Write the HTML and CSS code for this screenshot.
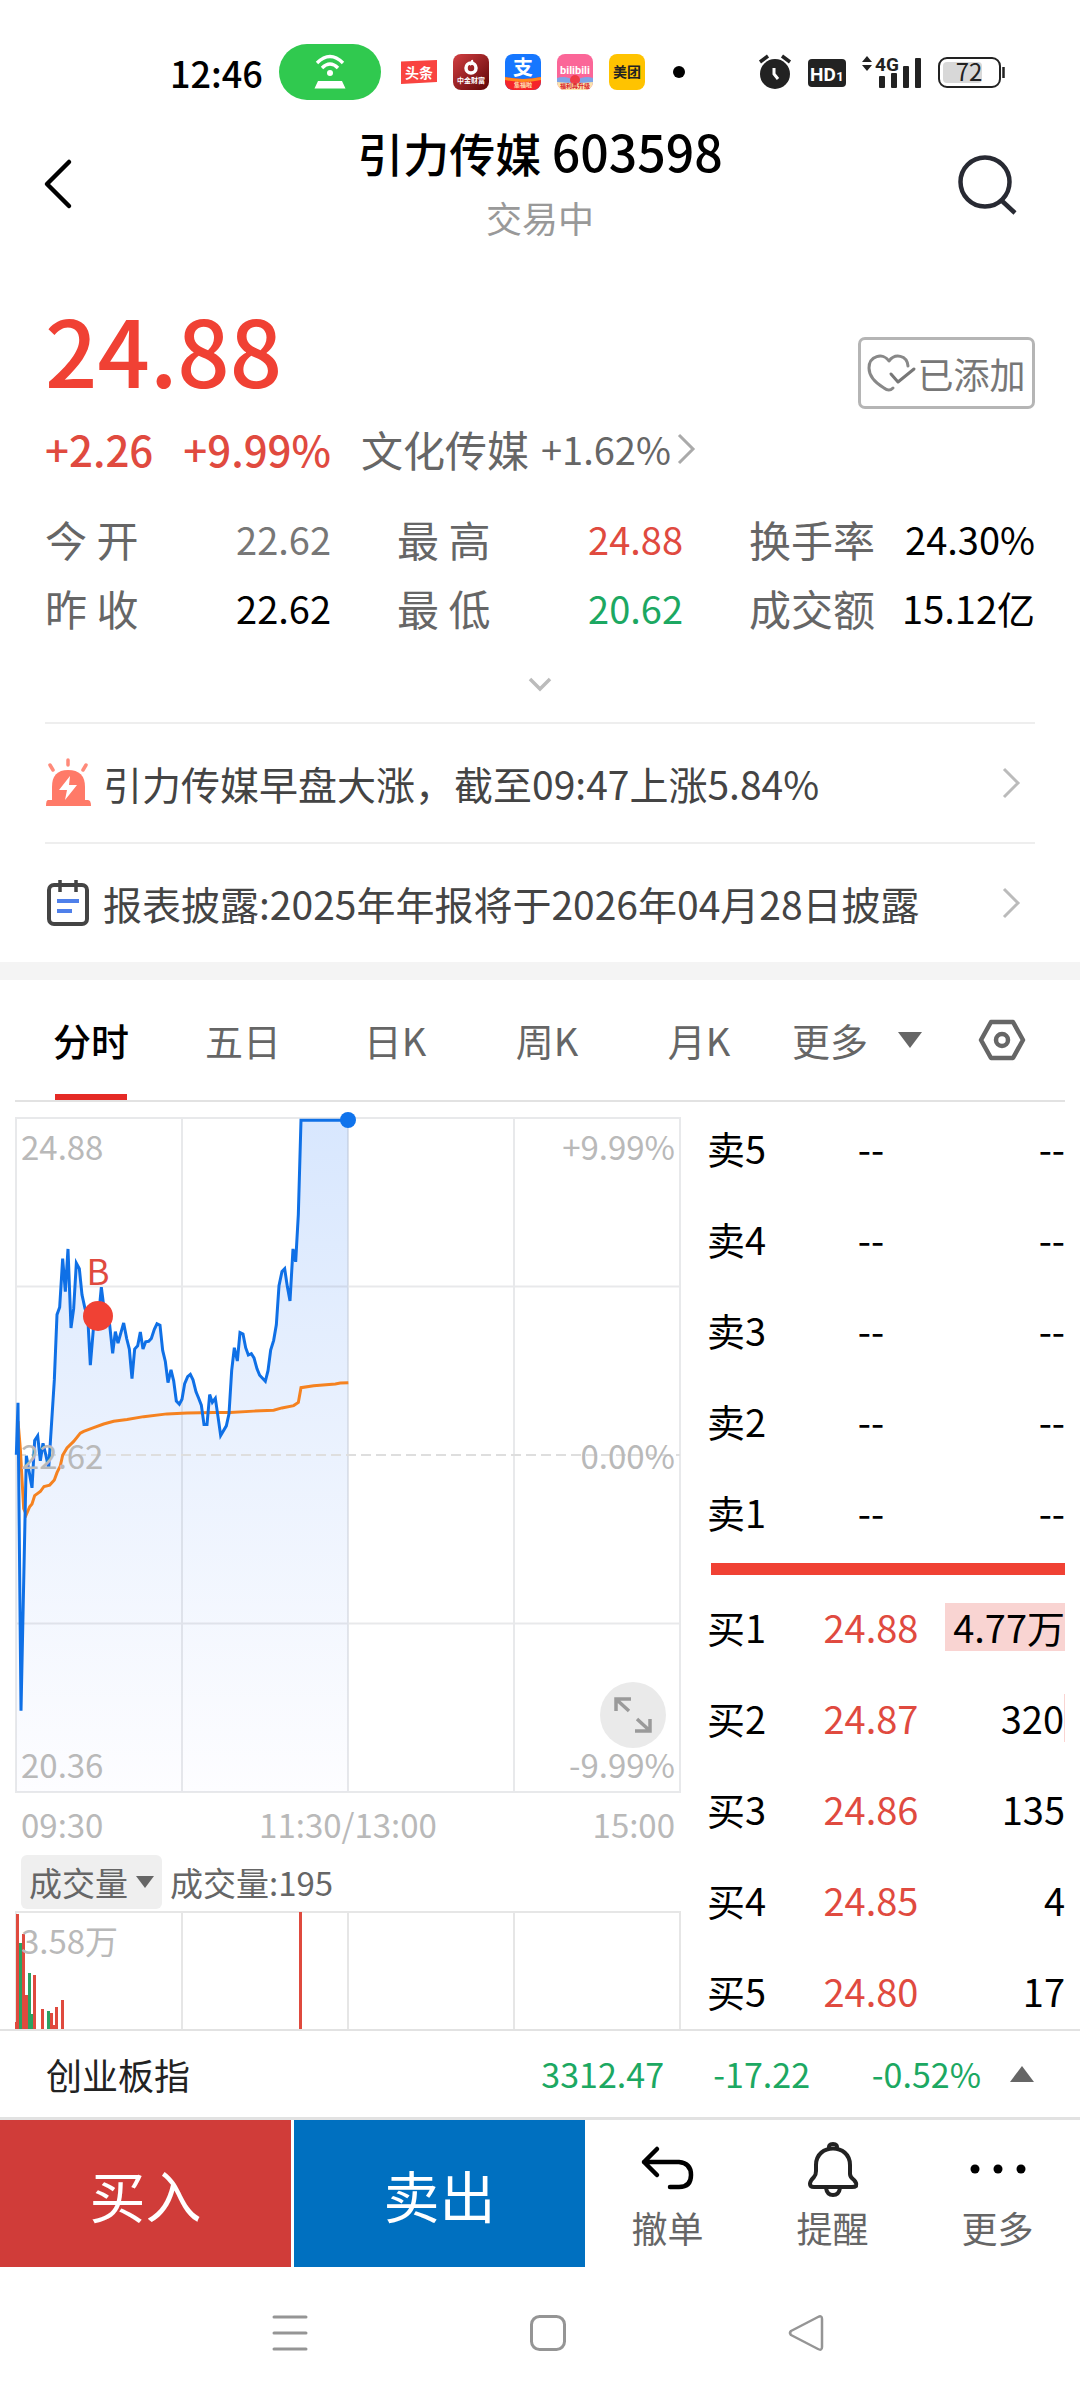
FILE: index.html
```html
<!DOCTYPE html>
<html lang="zh-CN">
<head>
<meta charset="utf-8">
<meta name="viewport" content="width=device-width">
<title>引力传媒 603598</title>
<link rel="stylesheet" href="styles.css">
</head>
<body>
<div class="status">
  <span class="clock">12:46</span>
  <span class="hotspot">
    <svg width="32" height="36" viewBox="0 0 32 36" fill="none" stroke="#fff" stroke-width="3.4"><path d="M3 9Q16-4 29 9M8 14Q16 6 24 14"/><circle cx="16" cy="19" r="3" fill="#fff" stroke="none"/><path d="M4 27H28L31.500 34.500H.5z" fill="#fff" stroke="none"/></svg>
  </span>
  <span class="apps">
    <svg width="36" height="36" viewBox="0 0 36 36"><path d="M0 7.500 36 6V28L0 30z" fill="#f94440"/><text x="18" y="24" text-anchor="middle" font-size="14" font-weight="700" fill="#fff">头条</text></svg>
    <svg width="36" height="36" viewBox="0 0 36 36"><defs><linearGradient id="cj" x2="1" y2="1"><stop stop-color="#d33f42"/><stop offset="1" stop-color="#5e0506"/></linearGradient></defs><rect width="36" height="36" rx="8" fill="url(#cj)"/><circle cx="18" cy="14" r="5" fill="none" stroke="#fff" stroke-width="3.500"/><path d="M17 11Q20 9 19 6" stroke="#fff" stroke-width="2" fill="none"/><text x="18" y="29" text-anchor="middle" font-size="7" font-weight="700" fill="#fff">中金财富</text></svg>
    <svg width="36" height="36" viewBox="0 0 36 36"><defs><clipPath id="r"><rect width="36" height="36" rx="8"/></clipPath></defs><g clip-path="url(#r)"><path d="M0 0H36V36H0z" fill="#1677ff"/><path d="M0 23Q18 27 36 23V36H0z" fill="#f5252a"/><path d="M0 23Q18 27 36 23V26Q18 30 0 26z" fill="#ff8a1e"/></g><text x="18" y="21" text-anchor="middle" font-size="20" font-weight="700" fill="#fff">支</text><text x="18" y="33" text-anchor="middle" font-size="6" font-weight="700" fill="#ffe6b0">集福啦</text></svg>
    <svg width="36" height="36" viewBox="0 0 36 36"><g clip-path="url(#r)"><path d="M0 0H36V36H0z" fill="#fb6698"/><path d="M0 24Q9 21 18 27Q27 21 36 24V30H0z" fill="#7fa4e6"/><circle cx="18" cy="26" r="5" fill="#ee3b46"/><path d="M0 28Q18 30 36 28V36H0z" fill="#fce3ac"/></g><text x="18" y="20" text-anchor="middle" class="narrow" font-size="11" fill="#fff">bilibili</text><text x="18" y="34" text-anchor="middle" font-size="6" font-weight="700" fill="#d8232c">福利再升级</text></svg>
    <svg width="36" height="36" viewBox="0 0 36 36"><rect width="36" height="36" rx="8" fill="#ffc300"/><text x="18" y="23" text-anchor="middle" font-size="14" font-weight="700" fill="#222">美团</text></svg>
  </span>
  <span class="dot"></span>
  <span class="signals">
    <svg width="34" height="36" viewBox="0 0 34 36"><circle cx="17" cy="20" r="15" fill="#222"/><path d="M2 8 10 2M24 2 32 8" stroke="#222" stroke-width="3.500"/><path d="M16 14V20L20 25" fill="none" stroke="#fff" stroke-width="3"/></svg>
    <svg width="38" height="36" viewBox="0 0 38 36"><rect y="5" width="38" height="28" rx="4" fill="#222"/><text x="15" y="27" text-anchor="middle" class="narrow" font-size="19" fill="#fff">HD</text><text x="32" y="27" text-anchor="middle" class="narrow" font-size="13" fill="#fff">1</text></svg>
    <svg width="60" height="36" viewBox="0 0 60 36" fill="#222"><path d="M0 8 5 2 10 8zM0 11 5 17 10 11z"/><text x="25" y="17" text-anchor="middle" class="narrow" font-size="19">4G</text><rect x="17" y="22" width="6" height="12" rx="1"/><rect x="29" y="19" width="6" height="15" rx="1"/><rect x="41" y="12" width="6" height="22" rx="1"/><rect x="53" y="4" width="6" height="30" rx="1"/></svg>
    <svg width="68" height="36" viewBox="0 0 68 36"><rect x="1" y="4" width="61" height="29" rx="8" fill="none" stroke="#222" stroke-width="2"/><rect x="5" y="8" width="39" height="21" rx="4" fill="#d8d8d8"/><path d="M65.500 13V24" stroke="#222" stroke-width="2.500"/><text x="31" y="27" text-anchor="middle" font-size="24" fill="#222">72</text></svg>
  </span>
</div>

<header class="top">
  <button class="icon-btn" aria-label="返回"><svg width="28" height="52" viewBox="0 0 28 52" fill="none" stroke="#000" stroke-width="4.500" stroke-linecap="round" stroke-linejoin="round"><path d="M25 4 3 26 25 48"/></svg></button>
  <div class="title">
    <h1>引力传媒 <span>603598</span></h1>
    <p>交易中</p>
  </div>
  <button class="icon-btn" aria-label="搜索"><svg width="60" height="60" viewBox="0 0 60 60" fill="none" stroke="#282a33" stroke-width="4.500"><circle cx="27" cy="28" r="24.500"/><path d="M43 46 57 59"/></svg></button>
</header>

<section class="quote">
  <div class="price-line">
    <strong class="price">24.88</strong>
    <button class="added"><svg width="50" height="38" viewBox="0 0 50 38" fill="none" stroke="#888" stroke-width="3" stroke-linecap="round" stroke-linejoin="round"><path d="M26 34Q22 38 17 34C7 28 2 21 2 14C2 2 16-2 22 7C28-1 40 1 41 12"/><path d="M24 20 31 28 47 15" stroke="#777"/></svg>已添加</button>
  </div>
  <div class="change-line">
    <span class="chg up">+2.26</span><span class="chg up">+9.99%</span>
    <a class="sector" href="#">文化传媒 <span>+1.62%</span><svg width="18" height="32" viewBox="0 0 18 32" fill="none" stroke="#aaa" stroke-width="3"><path d="M2 2 16 16 2 30"/></svg></a>
  </div>
  <dl class="stats">
    <div><dt>今 开</dt><dd class="flat">22.62</dd></div>
    <div><dt>最 高</dt><dd class="up">24.88</dd></div>
    <div><dt>换手率</dt><dd>24.30%</dd></div>
    <div><dt>昨 收</dt><dd>22.62</dd></div>
    <div><dt>最 低</dt><dd class="down">20.62</dd></div>
    <div><dt>成交额</dt><dd>15.12亿</dd></div>
  </dl>
  <button class="expand" aria-label="展开"><svg width="22" height="14" viewBox="0 0 22 14" fill="none" stroke="#bbb" stroke-width="3.500"><path d="M1 1 11 11 21 1"/></svg></button>
  <a class="news" href="#">
    <svg width="48" height="48" viewBox="0 0 48 48"><path d="M7 41V28Q7 11 23 11Q40 11 40 28V41z" fill="#ff7a68"/><path d="M3 41H43Q46 41 46 47H1Q1 41 3 41z" fill="#ff7a68"/><path d="M23 1V6M5 6 8 11M41 6 38 11" stroke="#ff8a7a" stroke-width="3.500" stroke-linecap="round"/><path d="M25 17 14 31H22L20 41 32 26H24z" fill="#fff"/></svg>
    <span>引力传媒早盘大涨，截至09:47上涨5.84%</span>
    <svg width="18" height="32" viewBox="0 0 18 32" fill="none" stroke="#bbb" stroke-width="3"><path d="M2 2 16 16 2 30"/></svg>
  </a>
  <a class="news" href="#">
    <svg width="48" height="48" viewBox="0 0 48 48" fill="none" stroke="#444" stroke-width="4"><rect x="4" y="6" width="38" height="39" rx="5"/><path d="M15 1V13M31 1V13" stroke-width="3.500"/><path d="M12 22H34M12 32H27" stroke="#4f80ea"/></svg>
    <span>报表披露:2025年年报将于2026年04月28日披露</span>
    <svg width="18" height="32" viewBox="0 0 18 32" fill="none" stroke="#bbb" stroke-width="3"><path d="M2 2 16 16 2 30"/></svg>
  </a>
</section>

<nav class="tabs">
  <button class="active">分时</button><button>五日</button><button>日K</button><button>周K</button><button>月K</button>
  <button class="more">更多<svg width="24" height="16" viewBox="0 0 24 16"><path d="M0 0H24L12 16z" fill="#666"/></svg></button>
  <button aria-label="设置"><svg width="48" height="42" viewBox="0 0 48 42" fill="none" stroke="#666" stroke-width="4.500"><path d="M13 3H35L45 21 35 39H13L3 21z" stroke-linejoin="round"/><circle cx="24" cy="21" r="6"/></svg></button>
</nav>

<main class="market">
  <section class="charts">
    <div class="plot">
      <svg viewBox="0 0 666 676" fill="none">
        <defs><linearGradient id="area" x2="0" y2="1"><stop stop-color="#d8e7fe"/><stop offset=".5" stop-color="#ebf2fe"/><stop offset="1" stop-color="#fdfdff"/></linearGradient></defs>
        <svg x="1" y="1" width="664" height="674" viewBox="47 40 1992 1467" preserveAspectRatio="none" overflow="visible">
          <path fill="url(#area)" d="M48 1507V773L53 660 62 1330 78 775 95 845 103 742 112 732 120 786 128 748 137 775 145 803 162 610 170 468 178 452 187 346 195 418 203 325 212 497 220 455 228 356 237 368 245 425 254 455 262 470 270 578 279 500 287 480 295 470 303 408 312 460 328 490 337 552 345 505 353 530 370 486 379 520 387 543 395 607 403 543 412 536 420 506 428 543 436 527 445 526 453 520 462 500 470 488 479 491 487 546 495 570 503 616 512 588 520 612 528 656 537 663 545 652 553 618 562 603 570 598 578 610 587 636 595 650 603 665 611 707 620 707 628 642 636 659 645 650 653 690 661 731 678 710 686 684 694 590 702 540 711 569 719 507 728 510 736 540 744 556 753 553 761 562 770 586 778 600 795 613 803 590 811 545 820 524 828 490 836 405 845 374 853 368 861 407 869 438 878 325 886 353 894 250 902 45 1044 45V1507z"/>
        </svg>
        <path d="M1 1H665V675H1zM1 169.500H665M1 506.500H665M167 1V675M333 1V675M499 1V675" stroke="#8a9099" stroke-opacity=".2" stroke-width="2"/>
        <path d="M1 338H665" stroke="#dedede" stroke-width="2" stroke-dasharray="10 5"/>
        <svg x="1" y="1" width="664" height="674" viewBox="47 40 1992 1467" preserveAspectRatio="none" overflow="visible">
          <polyline vector-effect="non-scaling-stroke" stroke="#f58220" stroke-width="3" points="53,700 60,760 70,890 78,903 88,886 95,880 103,862 120,853 131,842 148,839 162,828 170,812 180,797 187,774 200,758 220,744 240,726 250,722 280,714 310,706 340,700 380,696 430,690 500,684 560,682 640,681 690,681 760,678 820,676 845,671 880,666 894,659 902,627 940,623 1005,619 1020,617 1044,616"/>
          <polyline vector-effect="non-scaling-stroke" stroke="#0f70e6" stroke-width="3" points="48,773 53,660 62,1330 78,775 95,845 103,742 112,732 120,786 128,748 137,775 145,803 162,610 170,468 178,452 187,346 195,418 203,325 212,497 220,455 228,356 237,368 245,425 254,455 262,470 270,578 279,500 287,480 295,470 303,408 312,460 328,490 337,552 345,505 353,530 370,486 379,520 387,543 395,607 403,543 412,536 420,506 428,543 436,527 445,526 453,520 462,500 470,488 479,491 487,546 495,570 503,616 512,588 520,612 528,656 537,663 545,652 553,618 562,603 570,598 578,610 587,636 595,650 603,665 611,707 620,707 628,642 636,659 645,650 653,690 661,731 678,710 686,684 694,590 702,540 711,569 719,507 728,510 736,540 744,556 753,553 761,562 770,586 778,600 795,613 803,590 811,545 820,524 828,490 836,405 845,374 853,368 861,407 869,438 878,325 886,353 894,250 902,45 1044,45"/>
        </svg>
        <circle cx="333" cy="3" r="8" fill="#0f73ec"/>
        <circle cx="83" cy="199" r="15" fill="#f04134"/>
        <text x="83" y="168" text-anchor="middle" font-size="35" fill="#e04a3f">B</text>
      </svg>
      <div class="scale"><span>24.88</span><span>22.62</span><span>20.36</span></div>
      <div class="scale right"><span>+9.99%</span><span>0.00%</span><span>-9.99%</span></div>
      <button class="zoom" aria-label="全屏"><svg width="38" height="38" viewBox="0 0 38 38" fill="none" stroke="#9a9a9a" stroke-width="3.500"><path d="M2 15V3H17M3 4 15 15M36 23V35H21M35 34 23 23"/></svg></button>
    </div>
    <div class="times"><span>09:30</span><span>11:30/13:00</span><span>15:00</span></div>
    <div class="vol-head"><button>成交量<svg width="18" height="12" viewBox="0 0 18 12"><path d="M0 0H18L9 12z" fill="#666"/></svg></button><span>成交量:195</span></div>
    <div class="plot">
      <svg viewBox="0 0 666 118" shape-rendering="crispEdges">
        <path d="M1 118V1H665V118M167 1V118M333 1V118M499 1V118" fill="none" stroke="#e6e6e6" stroke-width="2"/>
        <path fill="#df4a3e" d="M0 111H1V118H0zM1 3H4V118H1zM7 23H10V118H7zM10 84H13V118H10zM18 64H21V118H18zM26 98H29V118H26zM35 102H38V118H35zM38 114H40V118H38zM40 96H43V118H40zM46 89H49V118H46zM284 1H287V118H284z"/>
        <path fill="#2aa262" d="M4 32H7V118H4zM13 62H16V118H13zM16 103H18V118H16zM32 100H35V118H32z"/>
      </svg>
      <div class="scale"><span>3.58万</span></div>
    </div>
  </section>
  <section class="book">
    <table>
      <tbody class="asks">
        <tr><th scope="row">卖5</th><td>--</td><td>--</td></tr>
        <tr><th scope="row">卖4</th><td>--</td><td>--</td></tr>
        <tr><th scope="row">卖3</th><td>--</td><td>--</td></tr>
        <tr><th scope="row">卖2</th><td>--</td><td>--</td></tr>
        <tr><th scope="row">卖1</th><td>--</td><td>--</td></tr>
      </tbody>
      <tbody class="split"><tr><td colspan="3"><div></div></td></tr></tbody>
      <tbody class="bids">
        <tr><th scope="row">买1</th><td>24.88</td><td><span class="depth">4.77万</span></td></tr>
        <tr><th scope="row">买2</th><td>24.87</td><td><span class="edge">320</span></td></tr>
        <tr><th scope="row">买3</th><td>24.86</td><td>135</td></tr>
        <tr><th scope="row">买4</th><td>24.85</td><td>4</td></tr>
        <tr><th scope="row">买5</th><td>24.80</td><td>17</td></tr>
      </tbody>
    </table>
  </section>
</main>

<div class="index-bar">
  <span class="name">创业板指</span><span>3312.47</span><span>-17.22</span><span>-0.52%</span>
  <svg width="24" height="16" viewBox="0 0 24 16"><path d="M0 16H24L12 0z" fill="#666"/></svg>
</div>

<div class="actions">
  <button class="buy">买入</button>
  <button class="sell">卖出</button>
  <button class="tool"><svg width="54" height="56" viewBox="0 0 54 56" fill="none" stroke="#000" stroke-width="4.500" stroke-linecap="round" stroke-linejoin="round"><path d="M16 8 3 21 16 34M3 21H38Q50 22 50 34Q50 46 38 46H29"/></svg>撤单</button>
  <button class="tool"><svg width="54" height="56" viewBox="0 0 54 56" fill="none" stroke="#222" stroke-width="4" stroke-linejoin="round"><path d="M10 24C10 2 44 2 44 24V33Q44 36 48 39Q51 42 50 45Q49 46 46 46H8Q4 46 4 43Q4 40 8 36Q10 34 10 30z"/><path d="M23 8Q22 3 27 3Q32 3 31 8M20 47Q21 54 27 54Q33 54 34 47"/></svg>提醒</button>
  <button class="tool"><svg width="56" height="56" viewBox="0 0 56 56"><circle cx="5" cy="28" r="4.500"/><circle cx="28" cy="28" r="4.500"/><circle cx="51" cy="28" r="4.500"/></svg>更多</button>
</div>

<nav class="system">
  <button aria-label="最近任务"><svg width="36" height="36" viewBox="0 0 36 36" stroke="#959595" stroke-width="3" stroke-linecap="round"><path d="M2 2H34M2 18H34M2 34H34"/></svg></button>
  <button aria-label="主页"><svg width="36" height="36" viewBox="0 0 36 36" fill="none" stroke="#959595" stroke-width="3"><rect x="1.500" y="1.500" width="33" height="33" rx="8"/></svg></button>
  <button aria-label="返回"><svg width="36" height="36" viewBox="0 0 36 36" fill="none" stroke="#959595" stroke-width="2.500" stroke-linejoin="round"><path d="M30 2Q34 0 34 4V32Q34 36 30 34L3 20Q1 18 3 16z"/></svg></button>
</nav>
</body>
</html>
```
FILE: styles.css
```css
* { box-sizing: border-box; }
body {
  margin: 0;
  background: #fff;
  color: #000;
  font-family: "Noto Sans CJK SC", sans-serif;
  font-size: 38px;
  line-height: 48px;
}
svg { display: block; flex: none; overflow: visible; }
button {
  margin: 0;
  padding: 0;
  border: 0;
  background: none;
  color: inherit;
  font: inherit;
}
a { color: inherit; text-decoration: none; }
h1, p, dl, dd { margin: 0; font-weight: 400; }
.up { color: #e04a3f; }
.down { color: #1ca862; }

.status {
  display: flex;
  align-items: center;
  height: 118px;
  padding: 26px 74px 0 170px;
}
.clock { font-size: 36px; font-weight: 500; }
.hotspot {
  display: grid;
  place-items: center;
  width: 102px;
  height: 56px;
  margin-left: 16px;
  border-radius: 28px;
  background: #30c94f;
}
.apps { display: flex; gap: 16px; margin-left: 20px; }
.dot {
  width: 12px;
  height: 12px;
  margin-left: 28px;
  border-radius: 50%;
  background: #000;
}
.signals { display: flex; gap: 16px; margin-left: auto; }
.narrow { font-family: "Roboto", sans-serif; font-weight: 700; }

.top {
  display: grid;
  grid-template-columns: 78px 1fr 78px;
  height: 128px;
  padding: 0 44px;
}
.icon-btn { display: flex; align-items: center; }
.title { text-align: center; }
.title h1 { font-size: 46px; line-height: 64px; font-weight: 500; }
.title h1 span { font-size: 50px; }
.title p { font-size: 36px; line-height: 66px; color: #999; }

.quote { padding: 50px 45px 0; }
.price-line { display: flex; justify-content: space-between; height: 118px; }
.price {
  font-size: 92px;
  line-height: 104px;
  font-weight: 500;
  color: #f04134;
}
.added {
  display: flex;
  align-items: center;
  justify-content: center;
  width: 177px;
  height: 72px;
  margin-top: 41px;
  border: 3px solid #b5b5b5;
  border-radius: 7px;
  color: #777;
  font-size: 36px;
}
.change-line { display: flex; align-items: center; height: 70px; margin-bottom: 20px; }
.chg { margin-right: 30px; font-size: 42px; font-weight: 500; }
.sector { display: flex; align-items: center; font-size: 42px; color: #666; gap: 12px; }
.sector span { font-size: 38px; }
.sector svg { margin-left: -6px; }
.stats {
  display: grid;
  grid-template-columns: repeat(3, 1fr);
  column-gap: 66px;
  line-height: 69px;
}
.stats div { display: flex; justify-content: space-between; white-space: nowrap; }
.stats dt { font-size: 42px; color: #666; }
.flat { color: #777; }
.expand {
  display: grid;
  place-items: center;
  width: 100%;
  height: 80px;
  padding-top: 6px;
}
.news {
  display: flex;
  align-items: center;
  gap: 10px;
  height: 120px;
  padding-right: 15px;
  border-top: 2px solid #eee;
  color: #444;
  font-size: 39px;
}
.news span { flex: 1; white-space: nowrap; }

.tabs {
  display: grid;
  grid-template-columns: repeat(5, 152fr) 164fr 126fr;
  height: 140px;
  border-top: 18px solid #f4f4f4;
  padding: 0 15px;
  color: #666;
}
.tabs button {
  display: flex;
  align-items: center;
  justify-content: center;
  border-bottom: 2px solid #e2e2e2;
}
.tabs .active {
  position: relative;
  color: #000;
  font-weight: 500;
}
.tabs .active::after {
  content: "";
  position: absolute;
  bottom: 0;
  left: calc(50% - 36px);
  width: 72px;
  height: 6px;
  background: #e52a26;
}
.tabs .more { gap: 30px; }

.market {
  display: grid;
  grid-template-columns: 666fr 358fr;
  column-gap: 26px;
  padding: 0 15px;
}
.charts { padding-top: 15px; }
.plot { position: relative; }
.plot > svg { width: 100%; height: auto; }
.scale {
  position: absolute;
  inset: 5px 6px;
  display: flex;
  flex-direction: column;
  justify-content: space-between;
  color: #b9b9b9;
  font-size: 33px;
}
.right { align-items: flex-end; }
.zoom {
  position: absolute;
  right: 15px;
  bottom: 45px;
  display: grid;
  place-items: center;
  width: 66px;
  height: 66px;
  border-radius: 50%;
  background: #eaeaea;
}
.times {
  display: flex;
  justify-content: space-between;
  padding: 7px 6px;
  color: #b9b9b9;
  font-size: 33px;
}
.vol-head {
  display: flex;
  align-items: center;
  gap: 8px;
  padding: 0 6px 2px;
  font-size: 33px;
  color: #666;
}
.vol-head button {
  display: flex;
  align-items: center;
  gap: 8px;
  height: 54px;
  padding: 0 8px;
  border-radius: 6px;
  background: #efefef;
}

/* The last row runs under the index bar, as in a scrolled list. */
.book { margin-bottom: -12px; }
.book table { width: 100%; border-collapse: collapse; table-layout: fixed; }
.book th, .book td { height: 91px; padding: 0; text-align: center; }
.book th { width: 94px; font-weight: 400; text-align: left; }
.book td:last-child { width: 124px; text-align: right; }
.bids td:nth-child(2) { color: #e04a3f; }
.book .split td { width: auto; height: 24px; }
.split div { height: 12px; margin-left: 4px; background: #f04134; }
.depth { display: block; margin-left: 4px; background: #f9d4d2; }
.edge { display: block; border-right: 1px solid #f9d4d2; }

.index-bar {
  position: relative;
  display: grid;
  grid-template-columns: 1fr 130px 146px 171px 53px;
  align-items: center;
  height: 91px;
  padding: 0 46px;
  border-top: 2px solid #e2e2e2;
  border-bottom: 3px solid #e2e2e2;
  background: #fff;
  color: #1ca862;
  font-size: 34px;
  text-align: right;
}
.index-bar .name { font-size: 36px; color: #222; text-align: left; }
.index-bar svg { justify-self: end; }

.actions {
  display: grid;
  grid-template-columns: 294fr 291fr repeat(3, 165fr);
  height: 147px;
}
.buy, .sell { color: #fff; font-size: 56px; }
.buy { margin-right: 3px; background: #d03c39; }
.sell { background: #0070c0; }
.tool {
  display: flex;
  flex-direction: column;
  align-items: center;
  padding-top: 21px;
  gap: 6px;
  color: #666;
  font-size: 36px;
}

.system {
  display: grid;
  grid-template-columns: repeat(3, 1fr);
  height: 132px;
  padding: 0 145px 0 161px;
}
.system button { display: grid; place-items: center; }
```
